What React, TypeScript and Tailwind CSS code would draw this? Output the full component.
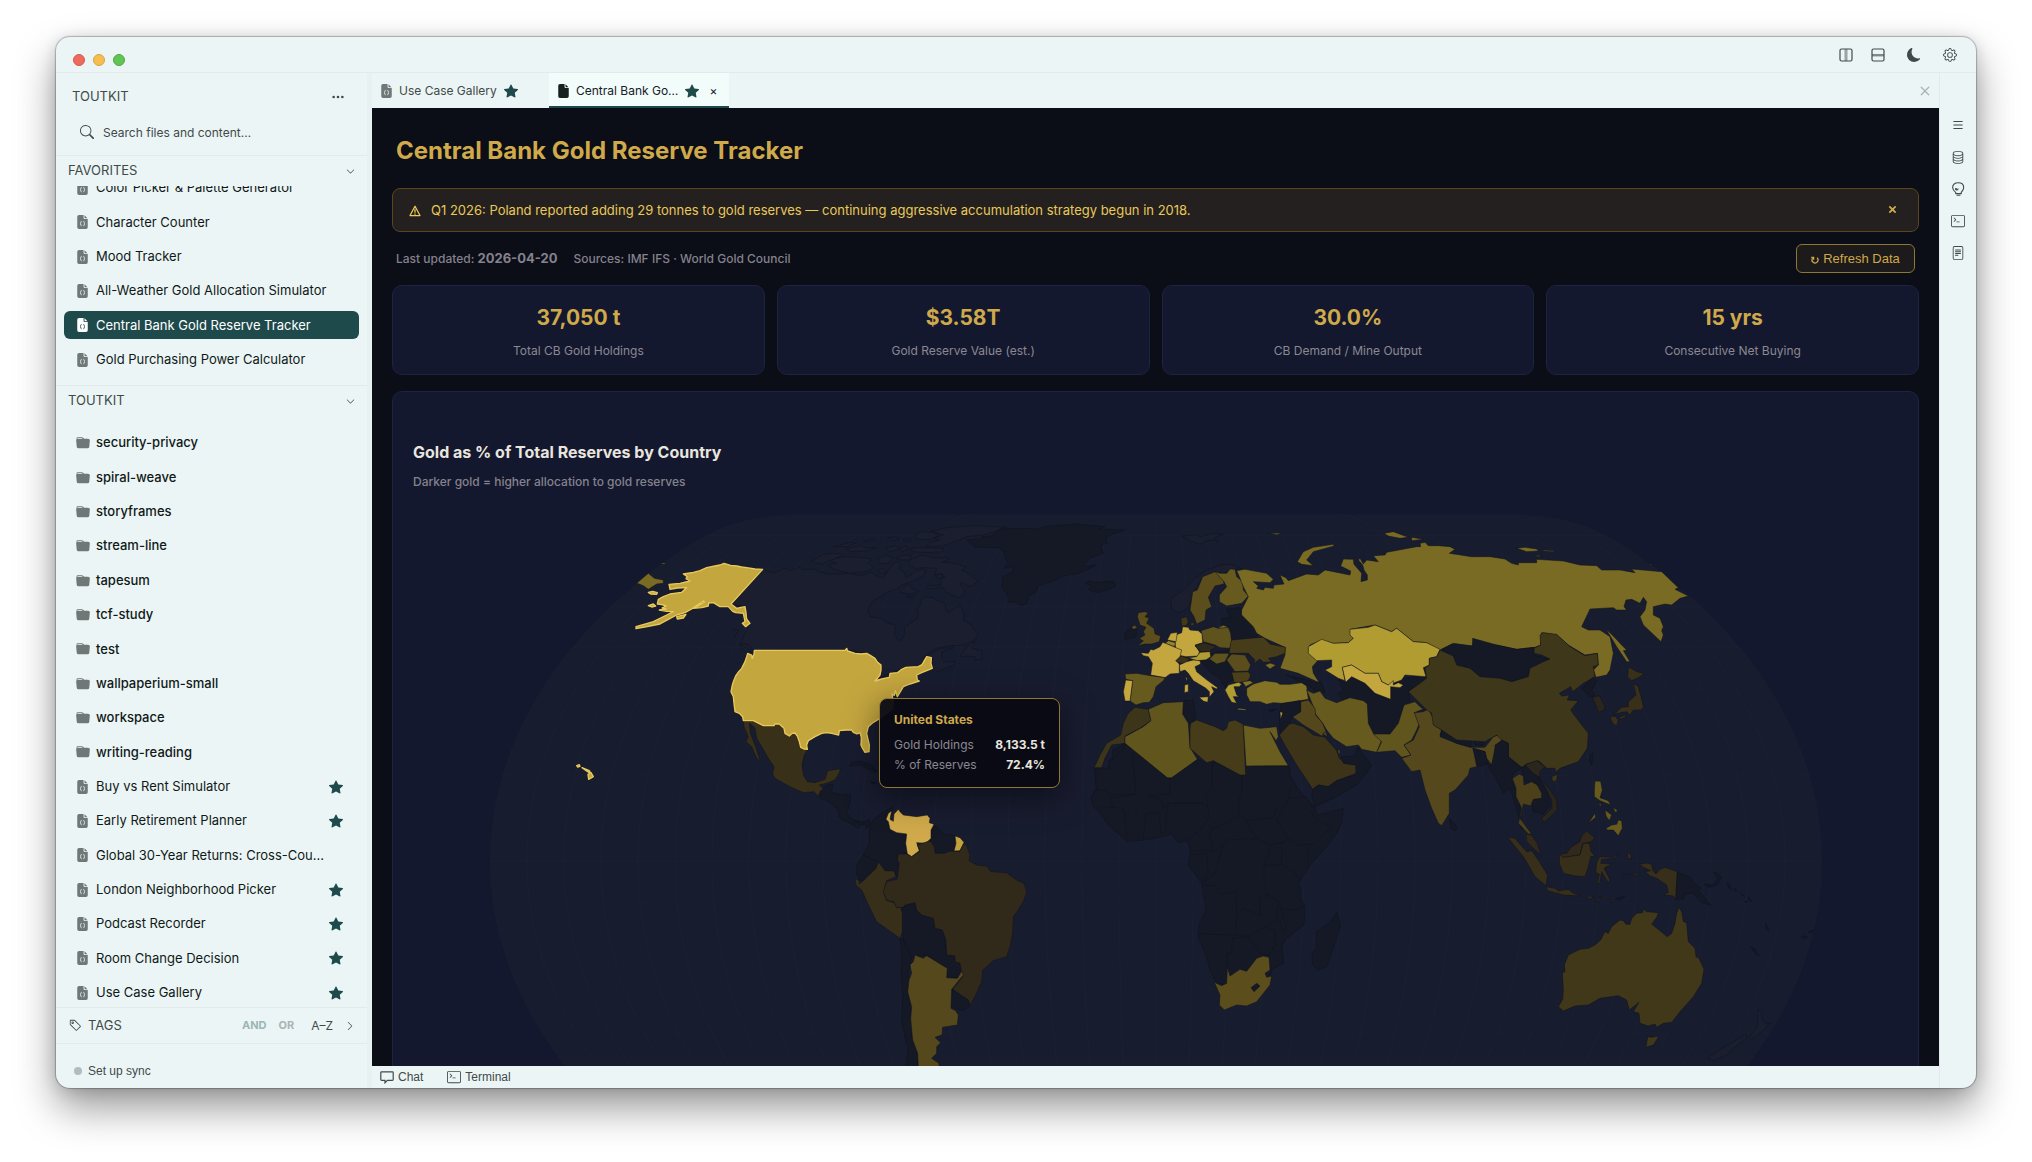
import React from "react";
import {
  BsSearch,
  BsThreeDots,
  BsChevronDown,
  BsChevronRight,
  BsTag,
  BsMoonFill,
  BsGear,
  BsX,
  BsList,
  BsDatabase,
  BsTerminal,
  BsFileText,
  BsStarFill,
  BsFolderFill,
} from "react-icons/bs";

/* ---------- icons ---------- */

function FileIcon({ solid = false, mark = "#ecf5f5" }: { solid?: boolean; mark?: string }) {
  return (
    <svg viewBox="0 0 12 16" className="h-[14px] w-[11px] shrink-0" aria-hidden="true">
      <path d="M2 0h5.2v3.2c0 .9.6 1.5 1.5 1.5H12V14a2 2 0 0 1-2 2H2a2 2 0 0 1-2-2V2a2 2 0 0 1 2-2z" fill="currentColor" />
      <path d="M8.3.4 11.7 3.8H9a.7.7 0 0 1-.7-.7z" fill="currentColor" />
      {!solid && (
        <path
          d="M5 7.400c-1 0-1 .5-1 1.100 0 .8-.2 1.100-.8 1.300.6.2.8.6.8 1.300 0 .6 0 1.100 1 1.100M7 7.400c1 0 1 .5 1 1.100 0 .8.2 1.100.8 1.300-.6.2-.8.6-.8 1.300 0 .6 0 1.100-1 1.100"
          fill="none"
          stroke={mark}
          strokeWidth="1"
        />
      )}
    </svg>
  );
}

function ColumnsIcon() {
  return (
    <svg viewBox="0 0 14 14" className="size-[14px]" fill="none" aria-hidden="true">
      <rect x="5.5" y="1" width="3" height="12" fill="#9aa3a2" />
      <rect x="1" y="1" width="12" height="12" rx="1.5" stroke="currentColor" strokeWidth="1.2" />
    </svg>
  );
}

function RowsIcon() {
  return (
    <svg viewBox="0 0 14 14" className="size-[14px]" fill="none" aria-hidden="true">
      <rect x="1" y="6" width="12" height="2.4" fill="#7f8988" />
      <rect x="1" y="1" width="12" height="12" rx="1.5" stroke="currentColor" strokeWidth="1.2" />
    </svg>
  );
}

function HeadIcon() {
  return (
    <svg viewBox="0 0 14 14" className="size-[14px]" fill="none" stroke="currentColor" strokeWidth="1.100" aria-hidden="true">
      <path d="M4.6 10.4C3 9 1.6 7.400 1.600 5.300 1.600 2.600 4 .8 7.200.8s5.500 1.900 5.500 4.800c0 2-1.400 3.400-2.500 4.800v1.200H4.800z" />
      <path d="M5.600 13.300h3.800M4.800 7.800c1.400.3 2.200-.2 2.400-1.300" />
      <circle cx="5" cy="7" r=".5" fill="currentColor" />
    </svg>
  );
}

function ChatIcon() {
  return (
    <svg viewBox="0 0 14 14" className="size-[14px]" fill="none" stroke="currentColor" strokeWidth="1.200" aria-hidden="true">
      <path d="M1.600 1.800h10.800a.8.8 0 0 1 .8.8v7a.8.8 0 0 1-.8.8H7.400L5 12.800v-2.400H1.600a.8.8 0 0 1-.8-.8v-7a.8.8 0 0 1 .8-.8z" />
    </svg>
  );
}

/* ---------- map ---------- */

const NONE = "#151926";
const ZERO = "#1b1e2e";
const HIGH = "#c4a63f";
const RUS = "#7a6b24";

type Shape = [string, string];

const northAmerica: Shape[] = [
  [ZERO, "-112,193 -80,203 -60,197 -48,190 -30,196 0,187 10,194 40,192 62,202 90,208 150,205 180,212 215,202 235,216 250,218 258,205 265,195 290,168 302,178 298,192 312,200 318,220 345,200 365,192 378,197 368,215 340,228 305,240 290,252 260,262 240,275 215,292 207,308 202,318 212,335 245,340 265,355 288,360 283,385 290,400 296,408 305,402 315,388 313,365 335,353 352,340 356,325 350,310 362,300 365,280 375,275 400,278 408,285 435,295 438,318 448,322 465,310 482,300 492,330 490,345 515,360 523,375 535,385 525,405 490,420 450,422 410,430 385,445 370,460 395,445 425,430 460,428 425,440 425,460 440,472 465,470 465,478 440,488 405,503 398,495 397,460 380,458 355,485 315,487 270,505 225,525 243,490 200,445 140,435 -137,437 -160,415 -178,418 -165,385 -150,360 -168,303 -205,300"],
  [ZERO, "330,165 365,150 400,158 440,158 445,165 425,172 465,175 500,185 485,195 510,208 533,228 510,245 485,232 480,240 494,255 490,272 475,278 440,262 430,248 385,252 382,243 425,240 420,225 435,215 425,205 405,212 410,190 375,188 345,190 325,178"],
  [ZERO, "85,165 130,155 175,157 215,162 205,175 220,190 195,200 150,205 100,192 85,180 110,175"],
  [ZERO, "35,168 70,148 120,145 130,150 95,165 65,178"],
  [ZERO, "395,78 440,68 520,62 620,67 590,78 550,90 500,95 470,108 430,122 380,125 390,112 420,105 400,98 430,90"],
  [ZERO, "343,92 360,80 400,82 415,92 390,104 350,103"],
  [ZERO, "330,130 370,128 430,130 430,140 380,143 335,140"],
  [ZERO, "100,125 150,112 167,115 140,125"],
  [ZERO, "140,132 180,122 195,128 230,128 200,138 150,140"],
  [ZERO, "258,128 290,122 300,130 275,140 258,136"],
  [ZERO, "232,162 260,150 280,160 265,175 240,176"],
  [ZERO, "190,108 220,100 225,106 200,112"],
  [ZERO, "262,98 285,96 298,102 280,107"],
  [ZERO, "308,103 330,100 333,108 315,108"],
  [ZERO, "300,130 320,122 325,133 305,140"],
  [ZERO, "290,160 310,150 335,152 330,165 300,165"],
  [ZERO, "230,195 245,190 262,202 245,205"],
  [ZERO, "300,262 322,235 335,250 357,260 330,267"],
  [ZERO, "318,275 345,270 340,280"],
  [ZERO, "405,212 420,207 430,215 418,220"],
  [ZERO, "480,455 500,425 527,408 515,430 545,438 546,462 525,465 525,455 500,453"],
  [ZERO, "-200,375 -185,373 -195,396"],
  [ZERO, "-180,415 -160,430 -145,443 -155,445 -175,430"],
  [NONE, "500,105 540,102 545,95 575,92 600,72 690,70 700,73 750,62 830,57 915,65 895,72 975,75 945,85 918,97 922,115 902,122 910,145 870,160 848,185 888,180 860,195 830,207 790,212 760,228 715,243 708,262 687,272 680,295 665,302 645,292 627,292 622,270 605,245 608,215 638,200 640,185 610,190 625,175 615,160 612,140 595,128 525,127"],
  [NONE, "855,235 870,228 885,233 915,230 940,228 947,243 925,255 890,263 865,255 875,243"],
];

const unitedStates: string[] = [
  "608,208 585,207 560,203 545,201 530,198 512,196 492,190 480,195 465,198 440,203 420,212 400,217 370,222 382,230 378,236 390,243 360,250 327,253 330,268 352,264 380,263 365,277 330,282 310,290 295,298 292,312 305,314 318,318 306,324 318,327 298,330 320,334 340,335 320,345 280,365 228,380 228,386 262,380 300,372 325,358 350,345 375,338 395,327 412,315 430,303 434,306 400,325 425,323 445,318 446,309 460,308 480,320 505,320 518,334 527,338 550,340 555,365 547,370 557,380 570,370 560,357 558,338 555,320 543,322 530,325 513,312",
  "265,277 278,274 292,278 290,283 272,282",
  "265,317 280,312 287,318 275,321",
  "350,350 378,343 370,354 352,357",
  "583,451 855,451 860,445 863,453 885,460 903,462 920,460 932,467 945,475 952,486 963,495 963,510 960,525 945,543 965,537 988,532 990,520 1012,518 1025,508 1038,502 1075,500 1086,494 1093,482 1100,470 1114,473 1113,490 1117,505 1085,518 1070,525 1072,540 1078,543 1050,552 1030,560 1023,572 1012,590 1006,572 1003,586 996,582 1000,605 998,625 980,640 960,655 940,667 925,680 920,700 924,718 928,735 927,755 915,757 906,742 903,735 904,712 900,698 891,702 880,697 875,690 858,690 838,692 836,705 827,703 815,700 800,698 785,700 765,710 745,722 740,735 742,748 732,747 722,742 718,725 712,708 705,699 697,700 688,708 675,700 672,685 658,672 645,672 642,677 610,677 580,662 550,662 548,650 538,640 525,635 522,610 520,590 513,575 517,555 521,542 527,528 536,515 545,505 555,485 560,470 563,460 575,465 577,475 582,463",
  "50,797 58,794 60,799 53,801",
  "66,803 88,812 92,820 83,815",
  "84,823 93,818 100,830 86,838",
];

const nearUnitedStates: Shape[] = [
  ["#39301a", "550,664 580,662 610,677 658,672 672,685 675,700 688,708 705,697 712,708 722,742 742,748 733,765 726,795 730,825 742,845 765,848 795,838 803,812 842,806 836,822 825,840 800,850 778,855 795,870 778,880 775,890 762,875 730,878 690,860 645,835 638,822 642,800 625,775 605,740 590,715 585,685 568,668 571,700 585,735 601,783 590,775 575,740 558,725 565,710 552,680"],
  [RUS, "220,258 265,220 283,235 310,240 310,250 290,252 265,268 250,257 232,250"],
  [RUS, "298,192 312,188 318,193"],
];

const southAmerica: Shape[] = [
  [NONE, "0,335 20,315 38,313 35,338 55,342 92,345 90,370 80,400 100,420 130,427 148,418 152,432 140,445 135,432 120,435 115,445 90,430 60,415 50,385 20,362 0,355"],
  [NONE, "88,258 95,248 115,243 150,252 172,275 150,270 125,255"],
  [NONE, "180,280 215,285 220,295 200,300 180,295"],
  [NONE, "150,305 170,308 160,312"],
  [NONE, "152,432 165,415 185,400 205,388 220,382 215,395 200,405 203,425 208,448 255,460 258,490 262,522 235,525 232,540 238,595 215,575 190,570 172,545 130,525 148,490 148,455"],
  [NONE, "130,525 172,545 168,565 135,590 130,603 118,600 118,588 110,585 110,555"],
  [NONE, "338,433 355,445 372,462 405,467 403,515 372,518 345,523 330,480"],
  [NONE, "245,682 285,668 290,690 340,712 345,745 370,752 380,825 410,835 425,865 415,893 380,893 382,865 330,830 320,825 285,830 275,835 250,780"],
  [NONE, "240,775 250,780 275,835 265,880 262,930 272,990 275,1070 295,1120 295,1162 258,1162 265,1100 258,1090 245,1020 248,950 243,880 245,820"],
  [NONE, "398,928 420,940 445,960 447,980 430,992 405,985 393,980"],
  ["#cfa94a", "205,400 215,392 210,418 220,424 222,402 235,388 240,395 250,405 290,410 322,405 330,415 328,428 342,433 333,450 333,475 318,490 290,488 298,512 275,530 262,522 257,490 260,462 230,458 210,448 205,425 198,418"],
  ["#c3a23c", "405,468 420,473 432,487 420,512 402,513 408,490"],
  ["#312a1a", "235,522 262,522 275,530 300,513 292,495 330,482 343,500 345,520 372,520 390,513 418,515 430,495 438,492 450,525 447,542 470,555 500,558 512,575 560,578 590,600 612,610 620,635 612,660 595,690 580,710 578,760 570,800 560,830 520,842 488,870 485,905 465,950 450,975 445,960 398,928 428,890 420,850 405,845 405,827 380,825 378,780 367,750 345,745 340,715 305,705 290,690 285,668 255,675 250,682 228,683 222,665 200,662 188,635 200,605 232,597 238,550 232,540"],
  ["#382f1a", "105,595 118,603 118,612 135,598 168,565 175,545 195,572 222,573 228,590 200,602 190,635 200,662 222,668 230,683 242,682 247,700 247,755 240,775 170,725 150,685 125,630 108,615"],
  ["#54481c", "285,825 310,835 320,827 382,865 380,893 412,895 425,873 430,885 395,928 393,985 407,992 415,1005 412,1035 368,1042 366,1065 345,1072 362,1088 350,1100 350,1120 335,1135 357,1150 357,1164 295,1164 293,1120 278,1080 275,1050 272,1015 275,980 263,935 267,900 275,880 270,855 280,845"],
];

const eurasia: Shape[] = [
  [ZERO, "305,78 350,75 360,80 400,70 430,73 400,85 415,93 385,90 360,103 330,92"],
  [ZERO, "272,265 310,240 345,205 380,180 430,163 460,165 485,175 460,178 430,190 400,187 365,205 345,240 333,270 325,295 295,310 275,295"],
  ["#5b4e1c", "330,300 338,245 352,240 368,200 405,185 428,192 432,222 405,228 385,262 395,290 378,300 375,330 350,342 342,320"],
  ["#675a1f", "405,185 420,190 440,190 450,177 465,178 470,200 488,215 490,240 505,258 485,280 440,288 418,275 418,255 440,230 432,215"],
  [NONE, "440,298 480,292 485,315 520,345 535,370 525,388 455,390 450,365 425,345 425,325 450,325 445,310"],
  [RUS, "470,182 495,178 560,190 580,208 570,218 520,215 535,228 530,235 550,240 555,232 580,235 582,225 612,222 600,195 618,203 625,212 680,192 715,195 735,180 810,195 812,183 782,168 790,147 820,148 822,163 845,190 843,215 862,210 862,195 852,180 848,165 835,150 840,145 850,162 860,150 895,155 880,137 915,135 920,127 1010,110 1022,110 1020,100 1035,97 1045,107 1075,107 1110,110 1125,118 1108,130 1175,140 1230,140 1275,147 1295,160 1315,165 1315,158 1370,158 1370,148 1450,153 1500,165 1550,167 1565,180 1620,180 1665,188 1655,177 1745,185 1795,233 1785,238 1825,258 1800,265 1775,285 1755,282 1720,290 1720,315 1740,325 1750,350 1745,362 1750,375 1743,395 1690,345 1680,320 1695,300 1700,275 1690,262 1680,280 1655,268 1638,270 1632,290 1640,300 1610,300 1600,293 1530,297 1505,350 1525,360 1560,360 1590,380 1600,430 1590,480 1580,495 1548,502 1540,480 1555,465 1552,430 1515,435 1465,405 1430,375 1385,368 1382,405 1365,412 1310,418 1250,405 1215,403 1180,388 1178,408 1115,403 1080,420 1060,410 1040,398 1000,395 950,355 935,365 885,345 810,358 820,385 805,398 760,400 725,390 690,405 685,420 715,450 697,470 700,490 718,518 655,490 600,475 615,435 615,412 555,385 530,370 520,350 485,315 485,300 505,260 490,230 478,200"],
  [RUS, "652,155 670,125 700,112 760,103 762,108 700,125 680,150 700,167 665,163"],
  [RUS, "912,70 940,65 985,82 960,85 925,78"],
  [RUS, "995,82 1030,88 995,92"],
  [RUS, "1310,115 1335,112 1370,117 1375,123 1340,125"],
  [RUS, "1388,120 1422,122 1422,125 1390,123"],
  [RUS, "1360,138 1375,136 1388,140"],
  [RUS, "565,70 607,69 590,74"],
  [RUS, "1578,357 1600,378 1625,405 1640,420 1630,422 1650,455 1640,455 1610,410"],
  [RUS, "415,352 430,346 442,350 440,357 420,355"],
  [RUS, "1708,163 1716,162 1714,166"],
  ["#5b4e1c", "172,320 175,308 193,305 205,308 195,320 207,325 200,340 222,355 225,372 242,378 238,395 215,402 195,402 172,407 190,393 178,385 195,375 190,365 198,352 180,345"],
  [NONE, "133,370 155,352 170,358 168,380 135,390"],
  ["#5b4e1c", "155,350 165,345 172,355 158,358"],
  ["#413719", "303,325 320,320 325,335 318,347 305,348"],
  ["#413719", "330,340 342,337 342,346 334,347"],
  ["#5e521d", "363,362 400,350 415,355 445,352 452,370 455,395 450,415 420,413 405,405 370,395"],
  [HIGH, "287,375 305,368 308,350 325,352 330,360 355,362 366,372 368,398 345,405 358,425 355,438 318,440 290,435 285,400"],
  [HIGH, "262,390 272,370 292,367 288,395 272,392"],
  ["#968428", "255,400 265,392 287,398 283,410"],
  ["#312a1a", "345,408 372,398 408,410 385,425 362,425"],
  [NONE, "390,432 405,427 447,420 445,430 400,435"],
  ["#b19c32", "325,443 350,440 360,427 390,425 392,440 378,450 350,452"],
  ["#3d3319", "286,450 305,438 328,447 318,460 290,458"],
  [HIGH, "182,428 205,430 212,418 220,420 240,410 248,397 262,402 285,412 305,420 300,440 287,452 298,462 298,490 270,492 255,503 212,495 217,460 205,440 190,437"],
  [HIGH, "298,465 320,455 340,450 360,452 362,462 345,470 350,485 378,508 413,533 410,537 395,530 402,545 388,562 388,545 378,535 340,512 325,490 315,480 300,485"],
  [HIGH, "357,562 385,560 383,577 370,573"],
  [HIGH, "314,525 325,522 325,545 313,548"],
  [HIGH, "317,502 322,505 320,515"],
  ["#665a1e", "135,492 170,490 212,497 255,503 250,512 228,530 220,560 208,577 190,578 168,585 150,573 158,512 137,508"],
  [HIGH, "137,510 158,512 150,573 135,573 130,545"],
  [NONE, "362,452 378,450 388,450 410,462 440,455 455,485 460,510 440,518 437,535 425,520 422,505 395,490 372,465"],
  ["#5e521d", "388,447 405,430 448,430 435,455 410,462"],
  ["#5b4e1c", "440,450 455,432 495,435 512,465 505,483 465,485"],
  ["#4b4019", "455,487 505,485 512,495 505,512 490,517 462,517"],
  ["#b19c32", "435,540 445,525 475,517 485,522 478,530 462,530 470,555 478,560 460,560 470,580 455,577 445,560"],
  ["#b19c32", "472,595 498,598 498,601 475,599"],
  ["#463c19", "452,400 455,390 530,383 550,382 570,402 617,412 615,430 590,440 565,445 575,455 550,457 540,447 520,462 525,450 505,430 447,430"],
  [RUS, "555,465 570,459 588,465 570,477"],
  ["#827225", "487,515 510,512 520,518 497,530"],
  ["#827225", "500,535 520,522 555,512 590,517 600,523 630,523 665,518 680,528 685,568 640,575 605,580 580,578 560,583 540,575 510,575 500,555"],
  [NONE, "620,495 660,505 710,518 722,515 735,545 715,552 700,540 690,530 660,515"],
  [NONE, "775,508 795,517 815,500 855,520 885,550 930,570 935,530 945,520 970,505 1038,500 1040,515 985,540 990,575 970,580 970,610 955,640 930,672 880,672 860,640 862,590 830,565 790,575 775,550 790,540"],
  ["#b19c32", "685,410 725,388 760,400 805,398 820,385 810,375 810,358 865,352 885,345 935,365 950,355 1000,395 1040,398 1080,418 1070,440 1048,445 1048,465 1030,473 1038,500 975,495 965,510 925,525 905,515 895,490 855,490 815,465 787,472 795,512 775,505 735,480 755,470 755,450 710,452 685,430"],
  [HIGH, "787,472 815,465 855,490 895,490 905,515 925,525 940,512 940,525 955,518 970,525 960,533 932,530 932,568 885,550 855,520 815,500 797,517"],
  ["#675a1f", "680,540 700,550 720,543 735,565 770,578 810,563 850,572 862,582 865,640 880,670 905,690 890,727 845,718 835,705 800,710 760,685 740,660 728,640 705,610 700,590"],
  ["#54471c", "637,620 662,605 662,575 685,570 705,595 707,615 728,640 738,665 725,678 670,645"],
  [NONE, "603,582 660,572 662,605 637,620 625,650 600,672 598,620"],
  [HIGH, "600,605 608,608 602,628"],
  ["#54471c", "728,670 738,665 742,682"],
  ["#3d3319", "598,675 628,642 640,640 670,650 700,675 735,682 770,722 778,745 795,760 828,765 828,790 770,812 745,830 715,825 698,838 680,810 650,765 620,715"],
  ["#54471c", "773,718 780,720 780,732 775,732"],
  [NONE, "698,838 715,825 745,830 770,812 828,795 828,765 790,760 785,740 825,738 833,712 875,765 860,790 830,825 770,860 705,890 695,860"],
  ["#61551e", "890,727 905,695 880,672 930,672 955,640 972,585 1005,575 1020,590 1030,597 1003,608 1020,635 1010,660 995,690 972,705 993,735 965,742 945,722"],
  ["#54481c", "1003,608 1030,605 1045,597 1060,625 1062,645 1085,660 1080,675 1130,700 1172,712 1215,712 1240,680 1255,675 1268,690 1245,705 1245,735 1235,765 1220,745 1215,725 1180,715 1190,770 1170,775 1165,795 1125,840 1108,850 1108,910 1085,947 1075,940 1055,895 1035,840 1020,780 995,785 965,745 993,735 972,705 1000,690 1018,650"],
  [NONE, "1085,660 1130,685 1172,690 1172,712 1130,700 1080,680"],
  [NONE, "1180,690 1205,688 1215,700 1205,707 1185,703"],
  [NONE, "1178,715 1215,725 1222,760 1195,770"],
  [NONE, "1085,418 1120,400 1178,408 1178,385 1250,405 1310,418 1362,412 1362,435 1410,448 1390,455 1345,480 1345,500 1295,515 1200,500 1170,475 1130,465 1120,438"],
  ["#3f371a", "1080,420 1120,438 1130,465 1170,475 1200,500 1260,505 1295,515 1345,500 1350,475 1390,455 1410,447 1385,435 1362,430 1362,415 1382,405 1380,375 1390,368 1430,373 1470,410 1515,437 1552,430 1555,465 1540,470 1545,500 1510,520 1478,545 1472,530 1438,550 1445,558 1468,555 1462,570 1495,572 1472,600 1490,625 1525,670 1522,715 1495,755 1440,775 1427,787 1425,775 1400,775 1385,760 1375,752 1340,762 1325,772 1285,740 1285,700 1265,690 1250,675 1215,695 1130,690 1085,660 1060,645 1055,610 1035,595 1010,570 985,545 1020,520 1040,505 1035,475 1048,465 1048,445 1070,440"],
  ["#3f371a", "1415,800 1433,793 1430,812 1418,815"],
  [NONE, "1505,535 1540,502 1550,515 1535,540 1545,558 1530,560"],
  ["#2a261c", "1538,562 1558,557 1575,590 1570,602 1555,607"],
  ["#39301a", "1645,470 1670,485 1692,490 1680,500 1655,512 1643,500"],
  ["#39301a", "1660,520 1675,530 1683,560 1690,590 1685,600 1660,600 1650,615 1640,605 1612,610 1600,615 1625,592 1645,590 1645,575 1668,555"],
  ["#39301a", "1590,622 1605,618 1615,630 1610,648 1598,640"],
  ["#39301a", "1618,622 1640,613 1635,622 1622,628"],
  [NONE, "1530,735 1540,728 1535,765 1527,755"],
  [NONE, "1265,690 1285,700 1285,740 1325,775 1300,790 1295,810 1310,850 1320,890 1325,960 1318,930 1305,880 1290,835 1270,850 1255,820 1235,785 1220,760 1235,765 1245,715"],
  [NONE, "1325,775 1340,765 1375,800 1400,840 1410,885 1390,912 1360,905 1355,870 1385,865 1370,820 1335,815"],
  ["#4b4019", "1297,805 1318,792 1330,798 1332,825 1355,815 1372,825 1385,850 1385,865 1360,868 1352,888 1330,882 1325,910 1320,925 1355,972 1345,972 1315,940 1325,895 1308,860 1308,835"],
  ["#2a261c", "1335,765 1370,752 1395,770 1380,785 1378,805 1410,840 1430,870 1432,900 1392,938 1385,925 1415,895 1415,870 1400,840 1375,800 1360,790"],
  [NONE, "1108,925 1130,950 1128,962 1112,955"],
  [NONE, "565,600 590,597 572,606"],
  ["#3d351a", "42,773 60,735 80,700 122,675 130,640 145,610 165,592 205,598 213,632 180,655 135,678 135,700 95,705 75,745 65,773"],
  [NONE, "312,572 340,570 347,625 325,645 308,610"],
];

const northAfrica: Shape[] = [
  ["#61551e", "205,598 250,578 310,575 308,612 325,640 330,712 352,748 275,803 262,803 135,700 135,680 190,650 213,632"],
  ["#463c19", "330,655 332,640 350,630 405,650 430,662 440,655 445,635 465,630 490,643 497,795 480,795 400,752 380,758 330,715"],
  ["#695d1f", "490,645 540,655 590,650 595,680 588,692 570,665 600,725 625,767 498,768"],
];

const africa: Shape[] = [
  [NONE, "103,145 125,143 145,145 147,122 158,118 158,90 195,70 320,173 335,175 412,118 440,128 455,122 545,165 558,137 687,137 690,165 710,200 750,250 765,262 772,285 850,265 845,310 830,340 800,380 750,435 722,480 715,490 723,510 723,535 735,560 732,615 680,655 665,680 672,728 635,750 628,775 500,795 470,790 450,750 440,710 415,655 415,640 420,605 438,570 425,490 385,435 392,390 380,362 355,368 335,343 270,358 200,365 145,315 120,280 100,260 93,232 108,205"],
  ["#5b4e1c", "463,787 485,797 500,790 502,742 510,768 540,748 560,754 590,715 610,708 627,712 630,750 615,760 620,772 635,768 630,795 590,845 560,858 530,855 493,870 478,855 480,825"],
  [NONE, "573,803 590,790 600,798 582,815"],
  [NONE, "830,577 842,615 835,640 800,740 775,750 757,735 757,700 770,680 768,635 800,615 815,600"],
];

const africanBorders: string[] = [
  "147,122 190,88 195,70",
  "108,208 140,212 158,235 228,222 218,100",
  "158,225 228,222",
  "152,232 158,262 190,265 197,300 200,362",
  "260,228 330,220 330,178",
  "228,290 228,275 238,262 270,230 292,232 310,248 305,275 258,282 250,355",
  "110,260 158,262",
  "292,232 315,262 325,250 380,250 430,250 448,265",
  "436,235 455,205 458,125",
  "547,165 547,215 533,240 540,280",
  "455,325 500,310 540,280 555,300 600,298 640,290 650,265",
  "316,340 318,290 326,250",
  "295,280 305,340",
  "380,360 420,330 448,290 440,240",
  "392,392 460,392 448,345 455,325",
  "460,395 490,375 500,360 590,355 555,300",
  "590,355 630,375 675,365 680,350 650,300",
  "650,300 687,235 690,205 700,190",
  "687,235 740,230 755,260",
  "750,270 770,300 815,320 760,372 715,375 680,350",
  "752,372 743,385 745,435",
  "665,370 665,432 612,437",
  "630,375 628,400 612,437",
  "665,432 700,455 720,480",
  "612,437 612,490 625,525 600,530 602,585 550,565 530,585",
  "425,495 468,497 480,522 528,513 530,585 528,645 415,642",
  "528,645 565,650 615,620 650,600 655,545 625,525",
  "660,565 700,570 733,558",
  "655,545 668,580 680,625 668,635 660,600",
  "502,742 502,700 515,700 517,655 565,650 600,700 625,708",
  "615,620 645,635 645,675 625,708",
  "425,490 445,460 440,400 392,405",
  "490,375 465,460 425,490",
];

const oceania: Shape[] = [
  ["#665a1e", "345,153 362,154 367,180 360,203 385,212 392,225 360,212 343,200 343,180"],
  ["#665a1e", "355,220 363,222 363,230"],
  ["#665a1e", "375,240 395,255 388,272 378,258"],
  ["#665a1e", "398,232 412,240 408,250"],
  ["#665a1e", "378,295 395,285 410,283 415,270 425,272 427,295 415,317 400,300 382,300"],
  ["#665a1e", "325,280 345,250 347,262"],
  ["#312a1a", "138,312 155,315 172,340 183,375 160,355 140,335"],
  ["#312a1a", "240,372 260,370 275,350 300,335 305,318 320,303 345,325 330,337 308,340 300,375 250,382"],
  ["#382f1a", "83,322 105,325 140,365 155,362 175,390 203,435 198,467 165,440 130,380"],
  ["#382f1a", "238,372 250,382 300,375 310,340 328,340 333,365 345,378 332,380 325,410 315,440 285,438 250,430 238,400"],
  ["#382f1a", "198,470 225,475 235,483 265,478 280,490 303,498 250,495 203,482"],
  ["#382f1a", "350,400 358,380 400,382 413,373 405,385 365,388 362,400 395,402 372,415 390,450 385,458 365,425 358,462 352,460 358,432 347,428"],
  ["#382f1a", "320,503 330,498 343,501 325,507"],
  ["#382f1a", "355,502 385,498 380,504"],
  ["#382f1a", "346,514 358,516 358,521"],
  ["#382f1a", "393,520 398,510 410,508"],
  ["#382f1a", "445,433 470,430 477,436"],
  ["#382f1a", "427,433 435,431 436,436"],
  ["#382f1a", "443,367 453,375 452,388 443,385"],
  ["#382f1a", "514,465 520,465 517,476"],
  [NONE, "408,505 435,499 415,512"],
  ["#382f1a", "478,403 500,399 515,403 518,420 528,432 540,418 555,412 592,425 587,508 580,498 552,495 565,487 560,465 530,445 510,438 495,425 512,422 490,412"],
  [NONE, "592,427 630,440 648,465 665,475 655,480 692,525 665,518 640,490 615,492 610,508 588,508"],
  [NONE, "673,463 700,465 715,445 700,425 710,428 725,442 712,465 685,472"],
  [NONE, "740,458 748,462 755,478 745,472"],
  [NONE, "762,473 772,482 765,483"],
  [NONE, "780,488 795,500 786,496"],
  [NONE, "805,500 815,515 808,512"],
  [NONE, "792,513 803,515 797,518"],
  [NONE, "857,580 862,590 866,602 859,598"],
  [NONE, "812,650 822,655 838,678 825,670"],
  [NONE, "963,622 972,617 982,620 975,626"],
  [NONE, "985,605 1002,600 992,610"],
  ["#413819", "235,830 248,808 250,780 247,728 255,725 253,705 265,675 300,658 325,655 345,645 362,630 375,605 385,610 395,590 420,570 430,572 438,583 450,583 455,565 470,550 488,548 490,537 500,545 535,548 530,562 515,582 562,620 575,610 585,580 590,550 597,532 605,545 610,575 620,578 625,635 645,655 648,680 657,685 672,718 665,760 640,800 600,845 575,877 550,880 530,892 525,882 505,888 480,880 477,850 460,845 477,817 448,840 440,810 415,797 360,805 325,825 285,828 250,843"],
  ["#413819", "503,920 515,922 537,918 520,945 498,952"],
  [ZERO, "835,838 845,850 847,870 860,882 872,880 845,905 815,928 808,922 832,890"],
  [ZERO, "683,985 710,965 760,935 798,913 800,925 760,955 740,975 700,992"],
];

/* Natural Earth projection, centred on the globe drawing. */
const SCALE = 243.5;
const CX = 1156;
const CY = 861;

function project(lon: number, lat: number): string {
  const l = (lon * Math.PI) / 180;
  const p = (lat * Math.PI) / 180;
  const p2 = p * p;
  const p4 = p2 * p2;
  const x = l * (0.8707 - 0.131979 * p2 + p4 * (-0.013791 + p4 * (0.003971 * p2 - 0.001529 * p4)));
  const y = p * (1.007226 + p2 * (0.015085 + p4 * (-0.044475 + 0.028874 * p2 - 0.005916 * p4)));
  return (CX + SCALE * x).toFixed(1) + "," + (CY - SCALE * y).toFixed(1);
}

function meridian(lon: number, reach: number): string[] {
  const pts: string[] = [];
  for (let lat = -reach; lat <= reach; lat += 2) pts.push(project(lon, lat));
  return pts;
}

const sphere = [...meridian(-180, 90), ...meridian(180, 90).reverse()].join(" ");

const graticule: string[] = [];
for (let lon = -170; lon <= 170; lon += 10) {
  graticule.push(meridian(lon, lon % 90 === 0 ? 90 : 80).join(" "));
}
for (let lat = -80; lat <= 80; lat += 10) {
  graticule.push(project(-180, lat) + " " + project(180, lat));
}

function Region({ x, y, shapes }: { x: number; y: number; shapes: Shape[] }) {
  return (
    <g transform={`translate(${x} ${y}) scale(${1 / 3})`} stroke="#10131f" strokeWidth="1.600" strokeLinejoin="round">
      {shapes.map(([fill, points], i) => (
        <polygon key={i} fill={fill} points={points} />
      ))}
    </g>
  );
}

function WorldMap() {
  return (
    <svg viewBox="413 510 1485 697" className="block w-full" role="img" aria-label="World map of gold reserves">
      <polygon points={sphere} fill="#181c2f" />
      <g fill="none" stroke="#ffffff" strokeOpacity="0.025" strokeWidth="0.8">
        {graticule.map((points, i) => (
          <polyline key={i} points={points} />
        ))}
      </g>
      <Region x={800} y={505} shapes={northAmerica} />
      <Region x={560} y={500} shapes={nearUnitedStates} />
      <Region x={820} y={680} shapes={southAmerica} />
      <Region x={1060} y={720} shapes={africa} />
      <g transform={`translate(1060 720) scale(${1 / 3})`} fill="none" stroke="#10131f" strokeWidth="1.800">
        {africanBorders.map((points, i) => (
          <polyline key={i} points={points} />
        ))}
      </g>
      <Region x={1080} y={510} shapes={eurasia} />
      <Region x={1080} y={510} shapes={northAfrica} />
      <Region x={1480} y={730} shapes={oceania} />
      <g transform={`translate(560 500) scale(${1 / 3})`} fill={HIGH} stroke="#e8c95a" strokeWidth="4" strokeLinejoin="round">
        {unitedStates.map((points, i) => (
          <polygon key={i} points={points} />
        ))}
      </g>
    </svg>
  );
}

/* ---------- sidebar ---------- */

const favorites = [
  "Color Picker & Palette Generator",
  "Character Counter",
  "Mood Tracker",
  "All-Weather Gold Allocation Simulator",
  "Central Bank Gold Reserve Tracker",
  "Gold Purchasing Power Calculator",
];

const folders = [
  "security-privacy",
  "spiral-weave",
  "storyframes",
  "stream-line",
  "tapesum",
  "tcf-study",
  "test",
  "wallpaperium-small",
  "workspace",
  "writing-reading",
];

const files: { name: string; starred: boolean }[] = [
  { name: "Buy vs Rent Simulator", starred: true },
  { name: "Early Retirement Planner", starred: true },
  { name: "Global 30-Year Returns: Cross-Cou...", starred: false },
  { name: "London Neighborhood Picker", starred: true },
  { name: "Podcast Recorder", starred: true },
  { name: "Room Change Decision", starred: true },
  { name: "Use Case Gallery", starred: true },
];

function SectionHeader({ title }: { title: string }) {
  return (
    <button className="flex h-[30px] w-full shrink-0 items-center justify-between pr-3 pl-3 text-[13px] text-[#3f4a49]">
      <span>{title}</span>
      <BsChevronDown className="size-[9px]" />
    </button>
  );
}

function Sidebar() {
  return (
    <aside className="flex w-[311px] shrink-0 flex-col overflow-hidden">
      <div className="flex h-[46px] shrink-0 items-center justify-between pt-0.5 pr-[22px] pl-4 text-[13px] text-[#3f4a49]">
        <span>TOUTKIT</span>
        <button aria-label="More options">
          <BsThreeDots className="size-[14px]" />
        </button>
      </div>
      <label className="flex h-[37px] shrink-0 items-start gap-[9px] border-b border-[#e2ebea] pt-[5px] pl-6 text-[#3f4a49]">
        <BsSearch className="mt-px size-[14px] shrink-0" />
        <input
          aria-label="Search files and content"
          placeholder="Search files and content…"
          className="h-[18px] w-full bg-transparent text-[12px] leading-[18px] outline-none placeholder:text-[#3f4a49]"
        />
      </label>

      <SectionHeader title="FAVORITES" />
      <div className="flex h-[200px] shrink-0 flex-col justify-end overflow-hidden border-b border-[#e2ebea] px-2 pb-2">
        <ul className="grid h-[206px] shrink-0 auto-rows-fr items-center text-[13px] text-[#0f1918]">
          {favorites.map((name) => {
            const active = name === "Central Bank Gold Reserve Tracker";
            return (
              <li key={name}>
                <button
                  className={
                    active
                      ? "flex h-7 w-[295px] items-center gap-2 rounded-md bg-[#1f4a4c] pl-[13px] text-white"
                      : "flex h-7 w-[295px] items-center gap-2 rounded-md pl-[13px]"
                  }
                >
                  <span className={active ? "text-white" : "text-[#6f7877]"}>
                    <FileIcon mark={active ? "#1f4a4c" : "#ecf5f5"} />
                  </span>
                  {name}
                </button>
              </li>
            );
          })}
        </ul>
      </div>

      <SectionHeader title="TOUTKIT" />
      <div className="min-h-0 flex-1 overflow-hidden px-2 pt-[10px]">
        <ul className="grid h-[584px] auto-rows-fr items-center text-[13px] text-[#0f1918]">
          {folders.map((name) => (
            <li key={name}>
              <button className="flex h-7 w-full items-center gap-[6px] pl-3 font-medium">
                <BsFolderFill className="size-[14px] text-[#6f7877]" />
                {name}
              </button>
            </li>
          ))}
          {files.map((file) => (
            <li key={file.name} className="flex items-center justify-between pr-4">
              <button className="flex h-7 items-center gap-2 pl-[13px] whitespace-nowrap">
                <span className="text-[#6f7877]">
                  <FileIcon />
                </span>
                {file.name}
              </button>
              {file.starred && <BsStarFill className="size-[14px] shrink-0 text-[#1f4a4c]" />}
            </li>
          ))}
        </ul>
      </div>

      <div className="flex h-[37px] shrink-0 items-center border-y border-[#e2ebea] pr-3 pl-[13px] text-[13px] text-[#3f4a49]">
        <BsTag className="size-[13px]" />
        <span className="ml-[6px] flex-1">TAGS</span>
        <button className="text-[11px] font-bold text-[#9cb5b5]">AND</button>
        <button className="ml-3 text-[11px] font-bold text-[#a9b4b4]">OR</button>
        <button className="ml-[17px] text-[12px]">A–Z</button>
        <BsChevronRight className="ml-3 size-[10px]" />
      </div>
      <button className="flex h-11 shrink-0 items-center gap-[6px] pt-[10px] pl-[18px] text-left font-['Liberation_Sans',sans-serif] text-[12px] text-[#3f4a49]">
        <span className="size-2 rounded-full bg-[#b3bcbb]" />
        Set up sync
      </button>
    </aside>
  );
}

/* ---------- main pane ---------- */

const stats = [
  { value: "37,050 t", label: "Total CB Gold Holdings" },
  { value: "$3.58T", label: "Gold Reserve Value (est.)" },
  { value: "30.0%", label: "CB Demand / Mine Output" },
  { value: "15 yrs", label: "Consecutive Net Buying" },
];

function Tabs() {
  return (
    <div role="tablist" className="flex h-[35px] shrink-0 items-stretch text-[12px] text-[#3f4a49]">
      <button role="tab" aria-selected="false" className="flex w-[177px] items-center gap-[7px] pl-[9px]">
        <span className="text-[#6f7877]">
          <FileIcon />
        </span>
        Use Case Gallery
        <BsStarFill className="size-[14px] text-[#1f4a4c]" />
      </button>
      <div className="flex w-[180px] items-center border-b-2 border-[#1f4a4c] bg-[#f2fcfb] pt-0.5 pl-[9px]">
        <button role="tab" aria-selected="true" className="flex items-center gap-[7px] text-[#15201f]">
          <FileIcon solid />
          Central Bank Go…
          <BsStarFill className="size-[14px] text-[#1f4a4c]" />
        </button>
        <button aria-label="Close tab" className="ml-[10px] text-[#15201f]">
          ×
        </button>
      </div>
      <button aria-label="Close pane" className="mr-1 ml-auto text-[#a9b2b1]">
        <BsX className="size-5" />
      </button>
    </div>
  );
}

function Tooltip() {
  return (
    <div
      role="tooltip"
      className="absolute top-[188px] left-[466px] w-[181px] rounded-lg border border-[#8f7730] bg-[#0a0a14]/95 px-[14px] py-3 text-[12px] shadow-[0_8px_32px_rgba(0,0,0,0.5)]"
    >
      <p className="text-[12px] leading-[18px] font-bold text-[#cfa94a]">United States</p>
      <dl className="mt-[5px] text-[#8b8893]">
        <div className="flex h-[21px] items-center justify-between">
          <dt>Gold Holdings</dt>
          <dd className="font-bold text-[#e8e6df]">8,133.5 t</dd>
        </div>
        <div className="flex h-5 items-center justify-between">
          <dt>% of Reserves</dt>
          <dd className="font-bold text-[#e8e6df]">72.4%</dd>
        </div>
      </dl>
    </div>
  );
}

function Dashboard() {
  return (
    <main className="min-h-0 flex-1 overflow-hidden bg-[#0b0d17] px-5 pt-[23px]">
      <h1 className="px-1 text-[24px] leading-10 font-bold text-[#cfa94a]">Central Bank Gold Reserve Tracker</h1>

      <div className="mt-[17px] flex h-11 items-center rounded-lg border border-[#57471f] bg-[#24201f] pt-0.5 pr-[21px] pl-4 text-[13px] text-[#e8c95a]">
        <svg viewBox="0 0 14 14" className="size-3" fill="none" stroke="currentColor" strokeWidth="1.500" aria-hidden="true">
          <path d="M7 1.500 12.800 12.300H1.200zM7 5v4M7 10v1.300" strokeLinejoin="round" />
        </svg>
        <p className="ml-[10px] flex-1">
          Q1 2026: Poland reported adding 29 tonnes to gold reserves — continuing aggressive accumulation strategy begun in 2018.
        </p>
        <button aria-label="Dismiss" className="pb-1 text-[#cfa94a]">
          <svg viewBox="0 0 10 10" className="size-[9px]" stroke="currentColor" strokeWidth="2" aria-hidden="true">
            <path d="m1.500 1.500 7 7m0-7-7 7" />
          </svg>
        </button>
      </div>

      <div className="mt-3 flex h-[29px] items-center px-1 text-[12px] font-medium text-[#85828d]">
        <p>
          Last updated: <strong className="text-[13px] font-bold">2026-04-20</strong>
        </p>
        <p className="ml-4">Sources: IMF IFS · World Gold Council</p>
        <button className="ml-auto flex h-[29px] w-[119px] items-center justify-center gap-1 rounded-md border border-[#8f7730] bg-[#1c1a1a] font-['Liberation_Sans',sans-serif] text-[13px] font-normal text-[#cfa94a]">
          <svg viewBox="0 0 10 10" className="mt-[3px] size-2" fill="none" stroke="currentColor" strokeWidth="1.600" aria-hidden="true">
            <path d="M7.500 2.200A3.700 3.700 0 1 1 2 2.800M.3 1.800h3v3" />
          </svg>
          Refresh Data
        </button>
      </div>

      <dl className="mt-3 grid grid-cols-4 gap-3">
        {stats.map((s) => (
          <div
            key={s.label}
            className="flex h-[90px] flex-col-reverse items-center justify-center rounded-[10px] border border-[#1d2340] bg-[#14182e] pt-[3px]"
          >
            <dt className="mt-[9px] text-[12px] leading-[18px] text-[#8b8893]">{s.label}</dt>
            <dd className="text-[21px] leading-[30px] font-bold text-[#cfa94a]">{s.value}</dd>
          </div>
        ))}
      </dl>

      <section className="mt-4 rounded-[10px] border border-[#1d2340] bg-[#14182e] px-5 pt-12">
        <h2 className="text-[16px] leading-6 font-bold text-[#e8e6df]">Gold as % of Total Reserves by Country</h2>
        <p className="mt-[9px] text-[12px] leading-[18px] font-medium text-[#85828d]">Darker gold = higher allocation to gold reserves</p>
        <div className="relative mt-[19px]">
          <WorldMap />
          <Tooltip />
        </div>
      </section>
    </main>
  );
}

export default function App() {
  return (
    <div className="flex h-screen bg-white px-14 pt-[37px] pb-[74px] font-['Inter',sans-serif]">
      <div className="flex min-w-0 flex-1 flex-col overflow-hidden rounded-[14px] bg-[#ecf5f5] shadow-[0_0_1px_1px_rgba(0,0,0,0.25),0_20px_40px_rgba(0,0,0,0.4),0_2px_16px_rgba(0,0,0,0.15)]">
        <header className="flex h-9 shrink-0 items-center justify-between border-b border-[#e2ebea] pr-[19px] pl-[17px] text-[#3f4a49]">
          <div className="mt-[11px] flex gap-2">
            <button aria-label="Close window" className="size-3 rounded-full border border-[#d9574b] bg-[#ec6a5e]" />
            <button aria-label="Minimize window" className="size-3 rounded-full border border-[#dba140] bg-[#f4bf4f]" />
            <button aria-label="Zoom window" className="size-3 rounded-full border border-[#52a842] bg-[#61c554]" />
          </div>
          <div className="flex items-center">
            <button aria-label="Split into columns">
              <ColumnsIcon />
            </button>
            <button aria-label="Split into rows" className="ml-[18px]">
              <RowsIcon />
            </button>
            <button aria-label="Dark mode" className="ml-[22px]">
              <BsMoonFill className="size-[14px]" />
            </button>
            <button aria-label="Settings" className="ml-[22px]">
              <BsGear className="size-[14px]" />
            </button>
          </div>
        </header>

        <div className="flex min-h-0 flex-1">
          <Sidebar />
          <div className="w-[5px] shrink-0 bg-[#e7f1f1]" />
          <div className="flex min-w-0 flex-1 flex-col">
            <Tabs />
            <Dashboard />
            <footer className="flex h-[22px] shrink-0 items-center gap-6 pl-2 font-['Liberation_Sans',sans-serif] text-[12px] text-[#3f4a49]">
              <button className="flex items-center gap-1">
                <ChatIcon />
                Chat
              </button>
              <button className="flex items-center gap-1">
                <BsTerminal className="size-[14px]" />
                Terminal
              </button>
            </footer>
          </div>
          <nav className="flex w-[37px] shrink-0 flex-col items-center gap-[18px] border-l border-[#e2ebea] pt-[45px] text-[#3f4a49]">
            <button aria-label="Outline">
              <BsList className="size-[14px]" />
            </button>
            <button aria-label="Database">
              <BsDatabase className="size-[14px]" />
            </button>
            <button aria-label="Assistant">
              <HeadIcon />
            </button>
            <button aria-label="Terminal panel">
              <BsTerminal className="size-[14px]" />
            </button>
            <button aria-label="Notes">
              <BsFileText className="size-[14px]" />
            </button>
          </nav>
        </div>
      </div>
    </div>
  );
}
